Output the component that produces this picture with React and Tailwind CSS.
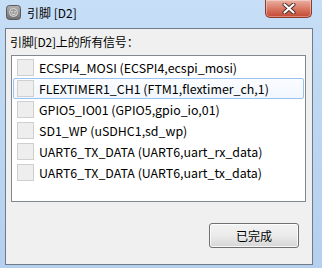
import React from 'react';

// Signals available on pin D2
const SIGNALS = [
    'ECSPI4_MOSI (ECSPI4,ecspi_mosi)',
    'FLEXTIMER1_CH1 (FTM1,flextimer_ch,1)',
    'GPIO5_IO01 (GPIO5,gpio_io,01)',
    'SD1_WP (uSDHC1,sd_wp)',
    'UART6_TX_DATA (UART6,uart_rx_data)',
    'UART6_TX_DATA (UART6,uart_tx_data)',
];

const FONT = { fontFamily: '"Segoe UI", "Noto Sans CJK SC", "Noto Sans", sans-serif' };

const AppIcon = () => (
    <svg width="15" height="15" viewBox="0 0 15 15">
        <defs>
            <linearGradient id="ig" x1="0" y1="0" x2="0" y2="1">
                <stop offset="0" stopColor="#b4b4b4" />
                <stop offset="1" stopColor="#6e6e6e" />
            </linearGradient>
        </defs>
        <rect x="0.5" y="0.5" width="14" height="14" rx="3" fill="url(#ig)" stroke="#5a5a5a" />
        <circle cx="7.5" cy="7.5" r="4" fill="#9a9a9a" stroke="#dcdcdc" strokeWidth="1" />
        <circle cx="6" cy="6.8" r="0.8" fill="#eeeeee" />
        <circle cx="9" cy="6.8" r="0.8" fill="#eeeeee" />
        <path d="M5.6 8.8 Q7.5 10.4 9.4 8.8" stroke="#eeeeee" strokeWidth="0.9" fill="none" />
    </svg>
);

const CloseButton = () => (
    <div className="w-[47px] h-[18px] rounded-b-[5px] border border-t-0 border-[#8c3a2c] bg-gradient-to-b from-[#eab0a2] via-[#d97a66] to-[#c4452f] flex items-center justify-center shadow-[inset_0_0_0_1px_rgba(255,255,255,0.35)]">
        <svg width="14" height="11" viewBox="0 0 14 11">
            <path d="M2.5 1.5 L11.5 9.5 M11.5 1.5 L2.5 9.5" stroke="#4a2a24" strokeWidth="4" strokeLinecap="round" />
            <path d="M2.5 1.5 L11.5 9.5 M11.5 1.5 L2.5 9.5" stroke="#ffffff" strokeWidth="2.2" strokeLinecap="round" />
        </svg>
    </div>
);

const SignalRow = ({ label, hovered }) => (
    <div
        className={`h-[21px] mx-px flex items-center rounded-[2px] border ${hovered
            ? 'border-[#9cc3ee] bg-gradient-to-b from-[#fafcff] to-[#f1f7fe]'
            : 'border-transparent'
            }`}
    >
        <div className="ml-[3px] w-[17px] h-[17px] border border-[#cfcfcf] bg-[#eeeeee]" />
        <span className="ml-[5px] text-[12.4px] leading-[16px] text-black whitespace-nowrap">{label}</span>
    </div>
);

export default function App() {
    return (
        <div
            className="w-[322px] h-[268px] flex flex-col bg-gradient-to-b from-[#c6def6] via-[#bcd6f1] to-[#b5d0ee]"
            style={FONT}
        >
            {/* title bar */}
            <div className="h-[28px] flex items-start pl-[6px] pr-[9px]">
                <div className="mt-[5px]">
                    <AppIcon />
                </div>
                <span className="ml-[6px] mt-[5px] text-[12px] leading-[16px] text-black">引脚 [D2]</span>
                <div className="ml-auto mr-px">
                    <CloseButton />
                </div>
            </div>

            {/* client area */}
            <div className="ml-[5px] mr-[9px] h-[237px] border border-[#6f7b88] bg-[#f0f0f0] flex flex-col">
                <div className="pl-[4px] pt-[5px] text-[12px] leading-[16px] text-black tracking-[-0.2px]">引脚[D2]上的所有信号：</div>

                <div className="mt-[5px] ml-[5px] mr-[6px] h-[147px] border border-[#828790] bg-white pt-px">
                    {SIGNALS.map((s, i) => (
                        <SignalRow key={i} label={s} hovered={i === 1} />
                    ))}
                </div>

                <div className="flex justify-end mt-[21px] mr-[13px]">
                    <button className="w-[90px] h-[25px] rounded-[3px] border border-[#707070] bg-gradient-to-b from-[#f2f2f2] via-[#ebebeb] to-[#d6d6d6] text-[12px] text-black shadow-[inset_0_0_0_1px_rgba(255,255,255,0.8)]">
                        已完成
                    </button>
                </div>
            </div>
        </div>
    );
}
